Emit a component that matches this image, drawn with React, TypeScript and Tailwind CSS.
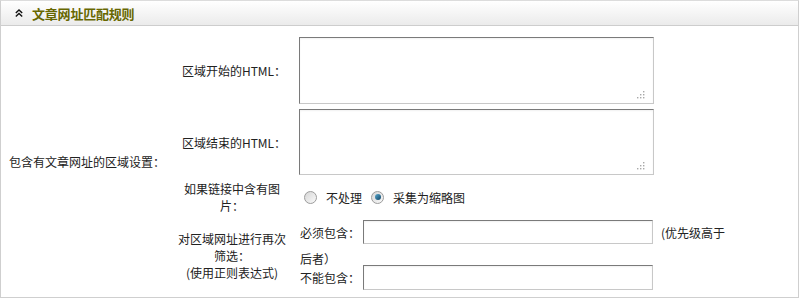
const font = "font-['Noto_Sans_CJK_SC','Noto_Sans',sans-serif]";

const boxBorder =
  "border border-t-[#7a7a7a] border-l-[#7a7a7a] border-r-[#c8c8c8] border-b-[#c8c8c8] bg-white shadow-[inset_0_1px_2px_rgba(0,0,0,0.06)] outline-none";

const Grip = () => (
  <svg width="9" height="9" viewBox="0 0 9 9" className="absolute right-[9px] bottom-[5px] pointer-events-none">
    {[
      [7, 1],
      [4, 4],
      [7, 4],
      [1, 7],
      [4, 7],
      [7, 7],
    ].map(([x, y], i) => (
      <rect key={i} x={x} y={y} width="1.4" height="1.4" fill="#a8a8a8" />
    ))}
  </svg>
);

const Area = ({ h }: { h: string }) => (
  <div className="relative ml-[6px]">
    <textarea className={`${boxBorder} w-[355px] ${h} block resize-none`} />
    <Grip />
  </div>
);

const Radio = ({ checked, label }: { checked?: boolean; label: string }) => (
  <label className="flex items-center gap-[9px]">
    <span className="flex h-[13px] w-[13px] items-center justify-center rounded-full border border-[#9c9c9c] bg-gradient-to-br from-[#d6d6d6] to-[#fafafa]">
      {checked && (
        <span className="h-[6px] w-[6px] rounded-full bg-gradient-to-br from-[#5aa9cf] to-[#0d4566]" />
      )}
    </span>
    <span>{label}</span>
  </label>
);

export default function App() {
  return (
    <div className={`${font} text-[12px] leading-[17px] text-[#222]`}>
      <div className="w-[799px] h-[298px] border border-[#cfcfcf] border-t-[#dcdcdc] flex flex-col">
        <div className="h-[25px] shrink-0 border-b border-[#cdcdcd] bg-gradient-to-b from-white to-[#ebebeb] flex items-center pl-[14px]">
          <svg width="8" height="8" viewBox="0 0 8 8" className="mb-[1px]">
            <path d="M0.8 4 L4 1 L7.2 4 M0.8 7.4 L4 4.4 L7.2 7.4" fill="none" stroke="#111" strokeWidth="1.4" />
          </svg>
          <span className="ml-[9px] text-[13px] font-bold text-[#676700] tracking-[-0.2px]">
            文章网址匹配规则
          </span>
        </div>

        <div className="flex flex-1">
          <div className="w-[170px] shrink-0 flex items-center pl-[8px]">
            包含有文章网址的区域设置：
          </div>

          <div className="flex flex-col pt-[11px] pb-[7px]">
            <div className="flex">
              <div className="w-[122px] flex items-center justify-center pl-[4px]">区域开始的HTML：</div>
              <Area h="h-[67px]" />
            </div>

            <div className="flex mt-[5px]">
              <div className="w-[122px] flex items-center justify-center pl-[4px]">区域结束的HTML：</div>
              <Area h="h-[66px]" />
            </div>

            <div className="flex h-[41px] items-center">
              <div className="w-[122px] text-center px-[12px] pt-[2px]">如果链接中含有图片：</div>
              <div className="ml-[11px] flex items-center gap-[9px] pt-[3px]">
                <Radio label="不处理" />
                <Radio checked label="采集为缩略图" />
              </div>
            </div>

            <div className="flex pt-[4px]">
              <div className="w-[122px] flex flex-col items-center justify-center text-center px-[6px]">
                <span>对区域网址进行再次筛选：</span>
                <span>(使用正则表达式)</span>
              </div>
              <div className="ml-[7px] flex flex-col">
                <div className="flex items-center h-[24px]">
                  <span className="w-[63px]">必须包含：</span>
                  <input type="text" className={`${boxBorder} w-[290px] h-[24px]`} />
                  <span className="ml-[8px]">(优先级高于</span>
                </div>
                <div className="h-[21px] flex items-end leading-[12px]">后者）</div>
                <div className="flex items-center h-[25px]">
                  <span className="w-[63px]">不能包含：</span>
                  <input type="text" className={`${boxBorder} w-[290px] h-[25px]`} />
                </div>
              </div>
            </div>
          </div>
        </div>
      </div>
    </div>
  );
}
